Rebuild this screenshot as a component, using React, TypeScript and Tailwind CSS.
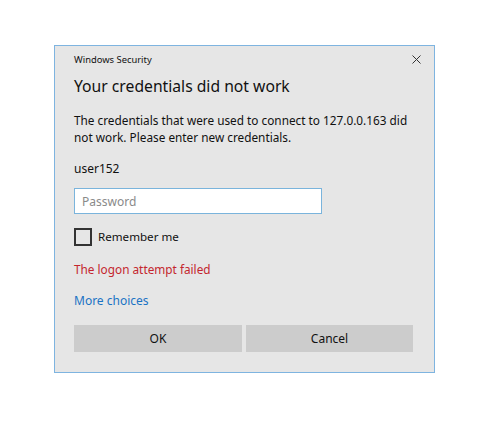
export default function App() {
  return (
    <div
      className="min-h-screen bg-white pt-[45px] pl-[54px]"
      style={{ fontFamily: '"Noto Sans", "Open Sans", sans-serif' }}
    >
      <div className="w-[381px] h-[328px] border border-[#7eb4e0] bg-[#e6e6e6] text-[#111] px-[19px]">
        {/* Title bar */}
        <div className="h-[27px] flex items-center justify-between">
          <span className="text-[9.4px] leading-none">Windows Security</span>
          <svg width="9" height="9" viewBox="0 0 9 9" className="mr-[-6px]">
            <path d="M0.5 0.5 L8.5 8.5 M8.5 0.5 L0.5 8.5" stroke="#333" strokeWidth="1" />
          </svg>
        </div>

        <h1 className="h-[26px] leading-[26px] text-[15.7px] whitespace-nowrap">Your credentials did not work</h1>

        <p className="mt-[13px] text-[11.8px] leading-[17px] whitespace-nowrap">
          The credentials that were used to connect to 127.0.0.163 did
          <br />
          not work. Please enter new credentials.
        </p>

        <div className="mt-[13px] h-[20px] leading-[20px] text-[12px]">user152</div>

        <input
          type="password"
          placeholder="Password"
          className="mt-[9px] block w-[248px] h-[26px] border border-[#7ab4dc] bg-white px-[7px] text-[12px] placeholder:text-[#8a8a8a] outline-none"
        />

        <label className="mt-[13px] h-[20px] flex items-center gap-[6px] text-[11.6px]">
          <span className="w-[18px] h-[18px] border-2 border-[#333] bg-transparent" />
          Remember me
        </label>

        <div className="mt-[12px] h-[20px] leading-[20px] text-[11.8px] text-[#c4262e]">
          The logon attempt failed
        </div>

        <div className="mt-[12px] h-[20px] leading-[20px] text-[12px] text-[#1a73c4]">
          More choices
        </div>

        <div className="mt-[14px] flex gap-[4px]">
          <button className="w-[168px] h-[27px] bg-[#cccccc] text-[12px]">OK</button>
          <button className="w-[167px] h-[27px] bg-[#cccccc] text-[12px]">Cancel</button>
        </div>
      </div>
    </div>
  );
}
